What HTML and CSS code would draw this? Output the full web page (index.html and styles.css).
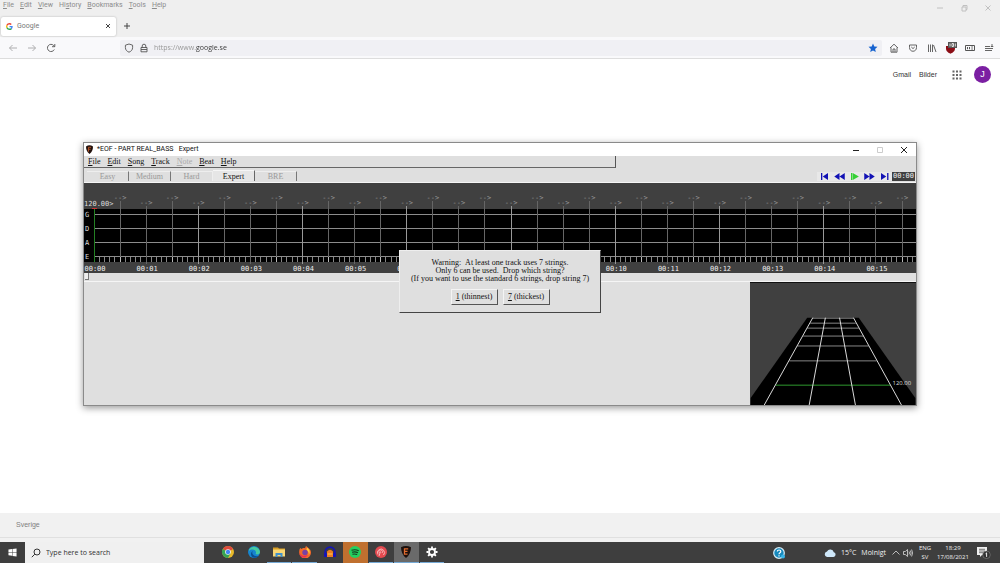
FILE: index.html
```html
<!DOCTYPE html>
<html lang="en">
<head>
<meta charset="utf-8">
<title>Google</title>
<link rel="stylesheet" href="styles.css">
</head>
<body>
<div class="desktop">
  <header class="browser">
    <div class="browser-top">
      <nav class="browser-menu">
        <button><u>F</u>ile</button><button><u>E</u>dit</button><button><u>V</u>iew</button><button>Hi<u>s</u>tory</button><button><u>B</u>ookmarks</button><button><u>T</u>ools</button><button><u>H</u>elp</button>
      </nav>
      <div class="win-buttons">
        <button aria-label="Minimise"><svg viewBox="0 0 8 8"><path d="M1 4h6"/></svg></button>
        <button aria-label="Restore"><svg viewBox="0 0 8 8"><path d="M2 3h4v4H2zM3 3V1.500h4v4H6"/></svg></button>
        <button aria-label="Close"><svg viewBox="0 0 8 8"><path d="M1.500 1.500l5 5M6.500 1.500l-5 5"/></svg></button>
      </div>
    </div>
    <div class="tab-strip">
      <div class="browser-tab">
        <svg class="favicon" viewBox="0 0 48 48"><path fill="#4285f4" d="M46 24.500c0-1.600-.1-3.100-.4-4.500H24v9h12.400c-.6 3-2.300 5.300-4.700 7l7 6c4.600-4.200 7.300-10.300 7.300-17.500z"/><path fill="#ea4335" d="M24 10c3.500 0 6.300 1.200 8.600 3.300l6.800-6.700C35.300 2.700 30 0 24 0 14.600 0 6.500 5.400 2.600 13.200l8 6.200C12.500 13.700 17.700 10 24 10z"/><path fill="#fbbc05" d="M10.500 28.600a14.500 14.500 0 0 1 0-9.200l-8-6.200a24 24 0 0 0 0 21.600z"/><path fill="#34a853" d="M24 48c6.500 0 11.900-2.100 15.900-5.800l-7.700-6c-2.200 1.500-4.900 2.300-8.200 2.300-6.300 0-11.600-4.200-13.500-9.900l-8 6.200C6.500 42.600 14.600 48 24 48z"/></svg>
        <span class="tab-title">Google</span>
        <button class="tab-close" aria-label="Close tab"><svg viewBox="0 0 8 8"><path d="M2 2l4 4M6 2l-4 4"/></svg></button>
      </div>
      <button class="new-tab" aria-label="New tab"><svg viewBox="0 0 8 8"><path d="M4 1v6M1 4h6"/></svg></button>
    </div>
    <div class="toolbar">
      <button class="tool faded" aria-label="Back"><svg viewBox="0 0 10 10"><path d="M9 5H1.500M4.500 2l-3 3 3 3"/></svg></button>
      <button class="tool faded" aria-label="Forward"><svg viewBox="0 0 10 10"><path d="M1 5h7.500M5.500 2l3 3-3 3"/></svg></button>
      <button class="tool" aria-label="Reload"><svg viewBox="0 0 10 10"><path d="M8.300 6.500A3.600 3.600 0 1 1 7.600 2.400L8.500 3.500M8.800 1v2.700H6"/></svg></button>
      <div class="url-bar">
        <svg viewBox="0 0 10 10"><path d="M5 1l3.600 1.200v2.300C8.600 7 7 8.400 5 9.200 3 8.400 1.400 7 1.400 4.500V2.200z"/></svg>
        <svg viewBox="0 0 10 10"><path d="M2 4.500h6v4.300H2zM3.200 4.500V3a1.800 1.800 0 0 1 3.600 0v1.500M2 6.500h6"/></svg>
        <input class="url" aria-label="Address" value="https://www.google.se">
        <button class="star" aria-label="Bookmark"><svg viewBox="0 0 10 10"><path d="M5 .6l1.300 2.900 3.200.3-2.400 2.100.7 3.200L5 7.500 2.200 9.100l.7-3.200L.5 3.800l3.200-.3z"/></svg></button>
      </div>
      <button class="tool" aria-label="Home"><svg viewBox="0 0 10 10"><path d="M1 5l4-3.800L9 5M2 4.500v4.700h6V4.500M4 9V6h2v3"/></svg></button>
      <button class="tool" aria-label="Pocket"><svg viewBox="0 0 10 10"><path d="M1.500 2h7v2.500c0 5-7 5-7 0zM3.300 4L5 5.600 6.700 4"/></svg></button>
      <button class="tool" aria-label="Library"><svg viewBox="0 0 10 10"><path d="M1.500 1.500V9M3.500 1.500V9M5.500 1.500V9M6.500 2l2.500 7"/></svg></button>
      <button class="tool" aria-label="Blocker"><svg class="shield" viewBox="0 0 12 12"><path fill="#8b0d16" stroke="none" d="M1 4h9v2.500c0 3-2.500 4.200-4.500 5.200C3.500 10.700 1 9.500 1 6.500z"/><path fill="#555" stroke="none" d="M3 0h9v6H3z"/><path stroke="#eee" d="M5 1.500v3M7 1.500h1.500v3H7zM10.300 1.500v3"/></svg></button>
      <button class="tool" aria-label="Extension"><svg viewBox="0 0 10 10"><path stroke-width="1" d="M.5 2.500h9v5h-9zM2.500 4v2.200M4.500 4v2.200M6.300 4h1.500M6.300 6h1.500"/></svg></button>
      <button class="tool" aria-label="Menu"><svg viewBox="0 0 10 10"><path d="M1 3.500h5M1 5.500h8M1 7.500h7M8 1v3M6.800 3.500h2.500"/></svg></button>
    </div>
  </header>

  <main class="page">
    <nav class="google-nav">
      <a href="#">Gmail</a>
      <a href="#">Bilder</a>
      <button class="apps" aria-label="Apps"><svg viewBox="0 0 10 10"><path d="M.5 .5h2v2h-2zM4 .5h2v2H4zM7.500 .5h2v2h-2zM.5 4h2v2h-2zM4 4h2v2H4zM7.500 4h2v2h-2zM.5 7.500h2v2h-2zM4 7.500h2v2H4zM7.500 7.500h2v2h-2z"/></svg></button>
      <button class="avatar">J</button>
    </nav>
    <footer class="google-footer"><div>Sverige</div></footer>
  </main>

  <section class="eof">
    <div class="eof-title">
      <svg viewBox="0 0 8 10"><path fill="#20100c" d="M0 1.500Q4-1 8 1.500 8 7 4 10 0 7 0 1.500z"/><path stroke="#c55a28" fill="none" d="M5.800 2.500H2.800v5M2.800 4.700h2.500"/></svg>
      <h1>*EOF - PART REAL_BASS &nbsp; Expert</h1>
      <div class="win-buttons">
        <button aria-label="Minimise"><svg viewBox="0 0 8 8"><path d="M1 4.500h6"/></svg></button>
        <button aria-label="Maximise" disabled><svg viewBox="0 0 8 8"><path d="M1.500 1.500h5v5h-5z"/></svg></button>
        <button aria-label="Close"><svg viewBox="0 0 8 8"><path d="M1 1l6 6M7 1l-6 6"/></svg></button>
      </div>
    </div>
    <nav class="eof-menu">
      <button><u>F</u>ile</button><button><u>E</u>dit</button><button><u>S</u>ong</button><button><u>T</u>rack</button><button disabled><u>N</u>ote</button><button><u>B</u>eat</button><button><u>H</u>elp</button>
    </nav>
    <div class="eof-bar">
      <div class="levels">
        <button>Easy</button><button>Medium</button><button>Hard</button><button class="current">Expert</button><button>BRE</button>
      </div>
      <div class="transport">
        <button aria-label="To start"><svg viewBox="0 0 14 8"><path d="M3 0h1.500v8H3zM11 0v8L5 4z"/></svg></button>
        <button aria-label="Rewind"><svg viewBox="0 0 14 8"><path d="M7 0v8L1 4zM13 0v8L7 4z"/></svg></button>
        <button class="play" aria-label="Play"><svg viewBox="0 0 14 8"><path d="M3 0h1.500v8H3zM5 0v8l7-4z"/></svg></button>
        <button aria-label="Forward"><svg viewBox="0 0 14 8"><path d="M1 0v8l6-4zM7 0v8l6-4z"/></svg></button>
        <button aria-label="To end"><svg viewBox="0 0 14 8"><path d="M3 0v8l6-4zM10 0h1.500v8H10z"/></svg></button>
        <output>00:00</output>
      </div>
    </div>
    <svg class="timeline" id="timeline" role="img" aria-label="Note editor"></svg>
    <div class="seek"><button aria-label="Seek position"></button></div>
    <div class="eof-lower">
      <svg class="fretboard" viewBox="0 0 166 123" role="img" aria-label="3D preview">
        <path fill="#000" d="M57 35h52l57 81v7H0v-7z"/>
        <path class="cross" d="M62 35.500h42M60 40.500h46M57 45.500h52M53 53.500h61M47 63.500h72M39 78.500h88"/>
        <path class="hit" d="M25 103h116"/>
        <path class="rail" d="M62.600 35L13.700 123M75.300 35L59 123M89.600 35l16 88M103.600 35l48.400 88"/>
        <text x="143" y="103">120.00</text>
      </svg>
    </div>

    <div class="dialog" role="alertdialog" aria-labelledby="warning">
      <p id="warning">Warning: &nbsp;At least one track uses 7 strings.<br>Only 6 can be used. &nbsp;Drop which string?<br>(If you want to use the standard 6 strings, drop string 7)</p>
      <div class="dialog-buttons">
        <button><u>1</u> (thinnest)</button>
        <button><u>7</u> (thickest)</button>
      </div>
    </div>
  </section>

  <footer class="taskbar">
    <button class="start" aria-label="Start"><svg viewBox="0 0 10 10"><path d="M.5 1.800l4-.6v3.500h-4zM5 1.100L9.500.5v4.200H5zM.5 5.200h4v3.500l-4-.6zM5 5.200h4.500v4.200L5 8.800z"/></svg></button>
    <label class="search">
      <svg viewBox="0 0 10 10"><circle cx="6" cy="4" r="3"/><path d="M3.800 6.200L.8 9.200"/></svg>
      <input type="text" aria-label="Search" placeholder="Type here to search">
    </label>
    <div class="apps-row">
      <button aria-label="Chrome"><svg viewBox="0 0 12 12"><circle cx="6" cy="6" r="6" fill="#e8b92a"/><path fill="#dd4b3e" d="M6 6L.8 3A6 6 0 0 1 11.200 3z"/><path fill="#35a455" d="M6 6L.8 3A6 6 0 0 0 6 12l2.500-4.500z"/><circle cx="6" cy="6" r="2.800" fill="#fff"/><circle cx="6" cy="6" r="2.200" fill="#4285f4"/></svg></button>
      <button aria-label="Edge"><svg viewBox="0 0 12 12"><circle cx="6" cy="6" r="6" fill="#1684cf"/><path fill="#45c9a0" d="M1 3.500A6 6 0 0 1 12 6c0 2-2 3-4.500 2C9 6 7 3.500 4.500 3.500 3 3.500 2 3.800 1 5z"/><path fill="#0b4e91" d="M5 5c-2 2 0 6 5.500 5-2 2.500-7 2.500-7.500-1.500C2.800 7 3.600 5.500 5 5z"/></svg></button>
      <button class="open" aria-label="File Explorer"><svg viewBox="0 0 12 12"><path fill="#d99f25" d="M0 1.500h5l1 1h6V5H0z"/><path fill="#f8d775" d="M0 3.500h12v7H0z"/><path fill="#3f91cd" d="M2.500 7h7v4h-2V9h-3v2h-2z"/></svg></button>
      <button class="open" aria-label="Firefox"><svg viewBox="0 0 12 12"><path fill="#f26a28" d="M1.200 2l1.300 1C4 1.700 5 2 6.200 2.200 6 1 7 0 7.500 0c.5 2 4.500 2.500 4.500 6.300A5.900 5.900 0 0 1 .2 7C0 5 .3 3.400 1.200 2z"/><path fill="#ffce3d" d="M8 1.500c3 2 3.500 5 1.800 7.500C10 6 9 5 7.500 4z"/><circle cx="6" cy="6.500" r="2.700" fill="#7942a4"/><path fill="#e72e55" d="M.3 7c2 3 5 3.500 8.500 2C7 12.500 1 13 .3 7z"/></svg></button>
      <button aria-label="Audacity"><svg viewBox="0 0 12 12"><path fill="none" stroke="#1414b8" stroke-width="1.800" d="M1.200 9V6a4.800 4.800 0 0 1 9.600 0v3"/><path fill="#1414b8" d="M0 7h3v4H0zM9 7h3v4H9z"/><path fill="#ec7d25" d="M3 5.500Q6 2 9 5.500V11H3z"/><path stroke="#ffd052" d="M3.500 8h5"/></svg></button>
      <button class="alert" aria-label="Spotify"><svg viewBox="0 0 12 12"><circle cx="6" cy="6" r="6" fill="#24cf5f"/><path fill="none" stroke="#173b20" stroke-width="1.100" d="M2.500 4.200q4-1.200 7.200.5M3 6.300q3.300-1 6 .5M3.400 8.200q2.600-.7 4.800.4"/></svg></button>
      <button class="open" aria-label="Music"><svg viewBox="0 0 12 12"><circle cx="6" cy="6" r="6" fill="#e34a50"/><path fill="none" stroke="#f6b5b5" d="M3 8.500a3.500 3.500 0 1 1 5.500.5M4.500 7a1.800 1.800 0 1 1 2.500 0M5.500 5.500L4 10"/></svg></button>
      <button class="open active" aria-label="EOF"><svg viewBox="0 0 12 12"><path fill="#1b100d" d="M1 1.200Q6-1 11 1.200 11 8 6 12 1 8 1 1.200z"/><path fill="none" stroke="#df6b2f" stroke-width="1.300" d="M8.200 2.800H4.500v5.400h3M4.500 5.300h3"/></svg></button>
      <button class="open" aria-label="Settings"><svg viewBox="0 0 12 12"><circle cx="6" cy="6" r="3" fill="none" stroke="#fff" stroke-width="1.800"/><path stroke="#fff" stroke-width="1.800" d="M6 .5v2M6 9.500v2M.5 6h2M9.500 6h2M2.100 2.100l1.400 1.400M8.500 8.500l1.400 1.400M9.900 2.100L8.500 3.500M3.500 8.500L2.100 9.900"/></svg></button>
    </div>
    <div class="tray">
      <button class="help" aria-label="Get help"><svg viewBox="0 0 12 12"><circle cx="6" cy="6" r="5.300" fill="#1689bd" stroke="#d7edf7" stroke-width="1.200"/><path fill="none" stroke="#fff" stroke-width="1.200" d="M4.300 4.500c0-2 3.500-2 3.500 0C7.800 6 6 5.700 6 7.300M6 8.300v1.200"/><circle cx="10" cy="9.500" r="2" fill="#38b5e8"/></svg></button>
      <button class="weather"><svg viewBox="0 0 12 10"><path fill="#cfe8fa" d="M3 9a2.800 2.800 0 0 1 0-5.500 3.700 3.700 0 0 1 6.800.8A2.400 2.400 0 0 1 9.500 9z"/></svg><span>15°C</span><span>Molnigt</span></button>
      <button class="small" aria-label="Hidden icons"><svg viewBox="0 0 10 10"><path d="M1.500 6.500L5 3l3.500 3.500"/></svg></button>
      <button class="small" aria-label="Volume"><svg viewBox="0 0 10 10"><path d="M.5 3.500h1.800L4.500 1.500v7L2.300 6.500H.5zM6 3.500q1 1.500 0 3M7.300 2.500q1.700 2.500 0 5M8.600 1.500q2 3.500 0 7"/></svg></button>
      <button class="stack lang"><span>ENG</span><span>SV</span></button>
      <button class="stack clock"><span>18:29</span><span>17/08/2021</span></button>
      <button class="notify" aria-label="Notifications"><svg viewBox="0 0 14 12"><path fill="#eee" d="M0 0h10v8H5L3 10V8H0z"/><path stroke="#555" stroke-width=".8" d="M2 2.300h6M2 4h6M2 5.700h4"/><circle cx="9.500" cy="7.800" r="3.800" fill="#333" stroke="#888" stroke-width=".6"/><path stroke="#fff" fill="none" stroke-width=".9" d="M8.600 6.700l1-.8v4"/></svg></button>
    </div>
  </footer>
</div>
<script src="timeline.js"></script>
</body>
</html>
```
FILE: styles.css
```css
* { box-sizing: border-box; }
body { margin: 0; font: 7px/9px "Open Sans", "Noto Sans", sans-serif; color: #333; }
button, input { font: inherit; color: inherit; background: none; border: 0; padding: 0; margin: 0; }
svg { display: block; flex: none; }
h1, p { margin: 0; font: inherit; }

.desktop { position: relative; display: flex; flex-direction: column; min-height: 100vh; }

/* Browser */
.browser-top { display: flex; justify-content: space-between; height: 15px; background: #efefef; }
.browser-menu { display: flex; align-items: flex-start; gap: 6px; padding: 1px 3px; color: #8c8c8c; font-family: Roboto, sans-serif; }
.win-buttons { display: flex; align-items: center; gap: 16px; padding-right: 8px; color: #c0c0c0; }
.win-buttons svg { width: 8px; height: 8px; fill: none; stroke: currentColor; }
.tab-strip { display: flex; align-items: center; height: 22px; gap: 7px; background: #efefef; }
.browser-tab { display: flex; align-items: center; gap: 4px; width: 115px; height: 19px; margin-left: 1px; padding: 0 4px 0 5px; background: #fff; border-radius: 2px; box-shadow: 0 0 2px #aaa; }
.favicon { width: 7px; height: 7px; }
.tab-title { flex: 1; color: #777; font-family: Roboto, sans-serif; }
.tab-close svg, .new-tab svg { width: 8px; height: 8px; fill: none; stroke: #444; }
.toolbar { display: flex; align-items: center; height: 22px; padding: 0 2px 0 3px; background: #f9f9fb; border-bottom: 1px solid #ddd; }
.tool { display: grid; place-items: center; width: 19px; height: 18px; }
.tool svg { width: 10px; height: 10px; fill: none; stroke: #555; stroke-width: .9; }
.tool .shield { width: 12px; height: 12px; }
.faded { opacity: .5; }
.url-bar { flex: 1; display: flex; align-items: center; gap: 5px; height: 16px; margin: 0 2px 0 60px; padding: 0 4px; background: #f0f0f4; border-radius: 2px; }
.url-bar svg { width: 10px; height: 10px; fill: none; stroke: #555; stroke-width: .9; }
.url { flex: 1; color: transparent; background: linear-gradient(to right, #929292 42px, #333 42px); background-clip: text; -webkit-background-clip: text; }
.url-bar .star svg { fill: #1763cf; stroke: none; }

/* Page behind the editor window */
.page { flex: 1; display: flex; flex-direction: column; justify-content: space-between; background: #fff; }
.google-nav { display: flex; align-items: center; justify-content: flex-end; gap: 8px; padding: 7px 9px 0 0; font-family: "Liberation Sans", sans-serif; }
.google-nav a { color: #333; text-decoration: none; }
.apps { margin-left: 7px; }
.apps svg { width: 10px; height: 10px; fill: #666; }
.avatar { width: 17px; height: 17px; margin-left: 4px; border-radius: 50%; background: #7b1fa2; color: #fff; font-size: 9px; }
.google-footer { height: 29px; background: #f1f1f1; color: #808080; font-family: "Liberation Sans", sans-serif; }
.google-footer div { height: 25px; padding: 7px 16px; border-bottom: 1px solid #e0e0e0; }

/* Editor window */
.eof { position: absolute; top: 142px; left: 83px; right: 83px; border: 1px solid #8a8a8a; background: #dfdfdf; box-shadow: 0 2px 7px #999; font-family: "Liberation Serif", serif; font-size: 8px; color: #111; }
.eof-title { display: flex; align-items: center; gap: 4px; height: 13px; padding: 0 8px 0 2px; background: #fff; font: 7px/9px Roboto, sans-serif; }
.eof-title > svg { width: 7px; height: 9px; }
.eof-title h1 { flex: 1; }
.eof .win-buttons { padding: 0; color: #222; }
.eof .win-buttons :disabled { color: #ccc; }
.eof-menu { display: flex; gap: 7px; width: 64%; height: 12px; padding: 1px 4px; border-right: 1px solid #555; border-bottom: 1px solid #666; }
.eof-menu button { line-height: 9px; }
.eof-menu :disabled { color: #aaa; }
.eof-bar { display: flex; justify-content: space-between; align-items: flex-end; height: 15px; padding: 0 1px 1px 3px; border-bottom: 1px solid #f5f5f5; }
.levels { display: flex; align-items: flex-end; }
.levels button { width: 42px; height: 10px; line-height: 9px; color: #999; border-top: 1px solid #eee; border-right: 1px solid #777; }
.levels button:nth-child(3) { border-right-color: #eee; }
.levels .current { height: 11px; color: #111; background: #e6e6e6; border-color: #f6f6f6 #666; border-left: 0; }
.transport { display: flex; }
.transport button { display: grid; place-items: center; width: 15px; height: 9px; background: #e8e8e8; }
.transport svg { width: 13px; height: 7px; fill: #1212b4; }
.transport .play svg { fill: #35d035; }
.transport output { width: 23px; background: #404040; color: #eee; font: 7px/9px "DejaVu Sans Mono", monospace; text-align: center; }
.timeline { width: 100%; height: 90px; background: #404040; font: 7px "DejaVu Sans Mono", monospace; }
.timeline .stamp { fill: #eee; text-anchor: middle; }
.timeline .arrow { fill: #999; text-anchor: middle; }
.timeline .tuning { fill: #ddd; }
.seek { height: 9px; padding-left: 1px; border-bottom: 1px solid #f5f5f5; }
.seek button { display: block; width: 4px; height: 7px; background: #eee; border-right: 1px solid #777; border-bottom: 1px solid #777; }
.eof-lower { display: flex; justify-content: flex-end; }
.fretboard { width: 166px; height: 123px; background: #404040; border-top: 1px solid #111; font: 6px "Open Sans", sans-serif; fill: #ddd; }
.cross { stroke: #888; }
.rail { stroke: #ddd; fill: none; }
.hit { stroke: #2f9a2f; }
.dialog { position: absolute; top: 107px; left: 50%; width: 202px; margin-left: -101px; padding: 8px 4px 7px; background: #dfdfdf; border: 1px solid #eee; border-right-color: #444; border-bottom-color: #444; text-align: center; white-space: nowrap; line-height: 8px; }
.dialog-buttons { display: flex; justify-content: center; gap: 5px; margin-top: 6px; }
.dialog-buttons button { width: 47px; height: 16px; border: 1px solid #f4f4f4; border-right-color: #555; border-bottom-color: #555; }

/* Taskbar */
.taskbar { display: flex; height: 21px; background: #3e3e3e; color: #eee; }
.start { display: grid; place-items: center; width: 25px; }
.start svg { width: 9px; height: 9px; fill: #fff; }
.search { display: flex; align-items: center; gap: 5px; width: 179px; padding: 0 6px; background: #f0f0f0; color: #333; }
.search svg { width: 10px; height: 10px; fill: none; stroke: #333; }
.search input { flex: 1; }
.search input::placeholder { color: #333; opacity: 1; }
.apps-row { display: grid; grid-template-columns: repeat(9, 1fr); width: 229px; margin-left: 12px; }
.apps-row button { display: grid; place-items: center; margin-right: 1px; border-bottom: 1px solid transparent; }
.apps-row svg { width: 12px; height: 12px; }
.apps-row .open { border-bottom-color: #76aad6; }
.apps-row .active { background: #6a6a6a; }
.apps-row .alert { background: #c0702f; }
.tray { flex: 1; display: flex; justify-content: flex-end; align-items: center; padding-right: 9px; }
.help svg { width: 12px; height: 12px; }
.help { margin-right: 39px; }
.weather { display: flex; align-items: center; gap: 5px; margin-right: 5px; }
.weather svg { width: 12px; height: 10px; }
.small { width: 12px; }
.small svg { width: 10px; height: 10px; fill: none; stroke: #ddd; stroke-width: .8; }
.stack { display: flex; flex-direction: column; align-items: center; font-size: 6px; line-height: 9px; }
.lang { width: 20px; }
.clock { width: 36px; }
.notify { margin-left: 6px; }
.notify svg { width: 14px; height: 12px; }
```
FILE: timeline.js
```js
const svg = document.getElementById("timeline");
const ORIGIN = 10;
const SECOND = 52.13;
const parts = [];
const vline = (x, y1, y2, color) =>
  parts.push(`<path stroke="${color}" d="M${Math.floor(x) + 0.5} ${y1}V${y2}"/>`);

parts.push('<rect y="26" width="100%" height="53" fill="#000"/>');
["G", "D", "A", "E"].forEach((name, i) => {
  const y = [31, 45, 59, 73][i];
  parts.push(`<rect x="10" y="${y}" width="100%" height="1" fill="#8c8c8c"/>`);
  parts.push(`<text class="tuning" x="1" y="${y + 3}">${name}</text>`);
});

const seconds = 15;
for (let t = 1; t <= seconds * 10 + 8; t++) {
  vline(ORIGIN + t * SECOND / 10, 74, 79, t % 5 ? "#888" : "#bbb");
}
for (let beat = 1; beat <= seconds * 2 + 1; beat++) {
  const x = ORIGIN + beat * SECOND / 2;
  const high = beat % 2 === 1;
  vline(x, high ? 18 : 23, high ? 74 : 81, beat % 4 === 0 ? "#999" : "#666");
  parts.push(`<text class="arrow" x="${x}" y="${high ? 17 : 22}">--&gt;</text>`);
}

// Time stamps that the open dialog would cover are left out.
const hidden = [7, 8, 9];
for (let s = 0; s <= seconds; s++) {
  if (hidden.includes(s)) continue;
  const x = ORIGIN + s * SECOND + 1;
  parts.push(`<text class="stamp" x="${x}" y="88">00:${String(s).padStart(2, "0")}</text>`);
}
parts.push('<text class="tuning" x="0" y="23">120.00&gt;</text>');
parts.push('<path stroke="#238023" d="M10.500 25V79"/><path stroke="#c33" d="M8 25.500h5"/>');
svg.innerHTML = parts.join("");
```
